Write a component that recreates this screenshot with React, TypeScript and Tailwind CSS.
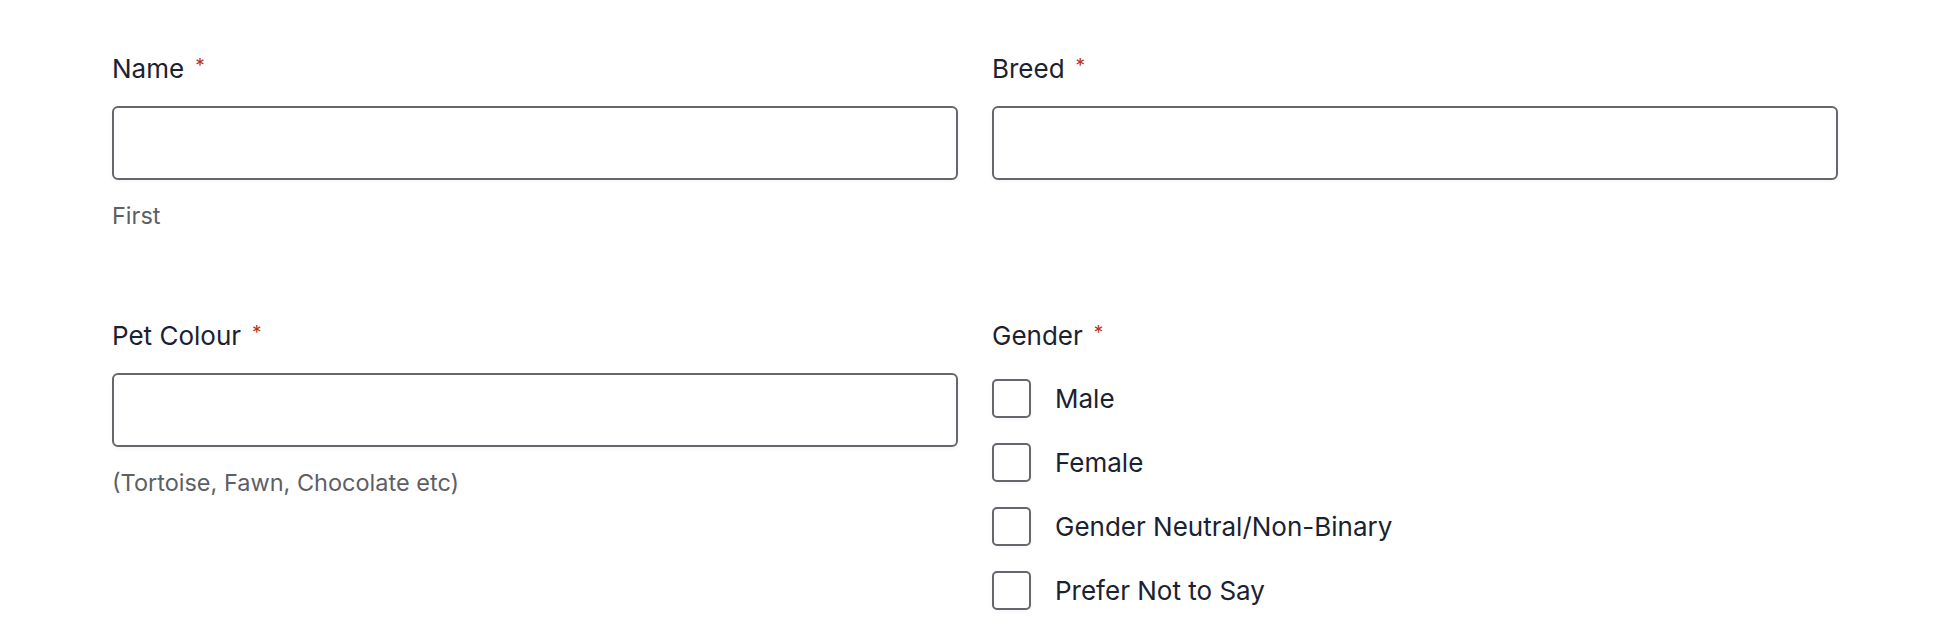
import React from "react";

type FieldProps = {
    label: string;
    helper?: string;
};

const Label = ({ text }: { text: string }) => (
    <div className="flex items-start h-[32px] leading-[32px] text-[26px] text-[#1a2232]">
        <span>{text}</span>
        <span className="ml-[11px] text-[19px] leading-[26px] text-[#b8321a]">*</span>
    </div>
);

const TextField = ({ label, helper }: FieldProps) => (
    <div className="flex flex-col">
        <Label text={label} />
        <input
            type="text"
            className="mt-[21px] h-[74px] w-full rounded-[6px] border-2 border-[#66676c] bg-white px-4 text-[26px] shadow-[0_2px_4px_rgba(0,0,0,0.04)] outline-none"
        />
        {helper && (
            <div className="mt-[20px] h-[32px] leading-[32px] text-[23.5px] text-[#5c5f66]">{helper}</div>
        )}
    </div>
);

const options = ["Male", "Female", "Gender Neutral/Non-Binary", "Prefer Not to Say"];

const GenderField = () => (
    <div className="flex flex-col">
        <Label text="Gender" />
        <div className="mt-[27px] flex flex-col gap-[25px]">
            {options.map((opt) => (
                <label key={opt} className="flex items-center gap-[24px] cursor-pointer">
                    <span className="h-[39px] w-[39px] shrink-0 rounded-[5px] border-2 border-[#66676c] bg-white shadow-[0_2px_4px_rgba(0,0,0,0.04)]" />
                    <span className="text-[26px] leading-[32px] text-[#1a2232]">{opt}</span>
                </label>
            ))}
        </div>
    </div>
);

export default function App() {
    return (
        <div className="min-h-screen bg-white" style={{ fontFamily: "Inter, 'Noto Sans', sans-serif" }}>
            <div className="ml-[112px] w-[1726px] pt-[53px] grid grid-cols-2 gap-x-[34px] gap-y-[88px] items-start">
                <TextField label="Name" helper="First" />
                <TextField label="Breed" />
                <TextField label="Pet Colour" helper="(Tortoise, Fawn, Chocolate etc)" />
                <GenderField />
            </div>
        </div>
    );
}
